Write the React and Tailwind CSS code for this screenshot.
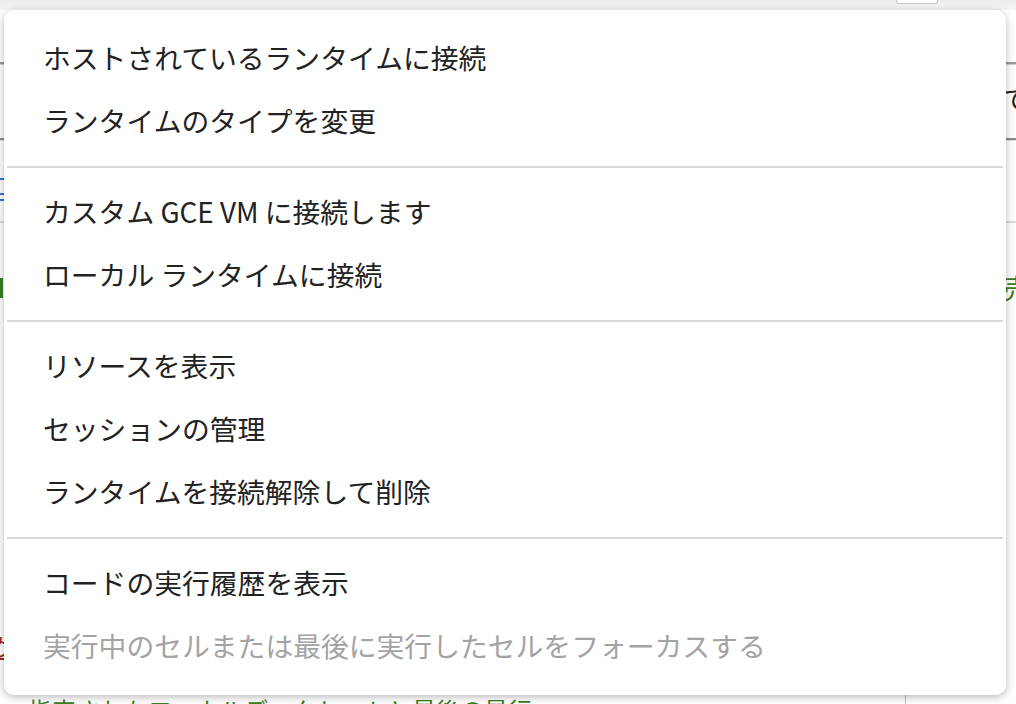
import React from 'react';

const FONT = { fontFamily: '"Noto Sans CJK JP", "Noto Sans", sans-serif' };

// groups of menu entries, separated by a rule
const GROUPS = [
  [{ label: 'ホストされているランタイムに接続' }, { label: 'ランタイムのタイプを変更' }],
  [{ label: 'カスタム GCE VM に接続します' }, { label: 'ローカル ランタイムに接続' }],
  [{ label: 'リソースを表示' }, { label: 'セッションの管理' }, { label: 'ランタイムを接続解除して削除' }],
  [{ label: 'コードの実行履歴を表示' }, { label: '実行中のセルまたは最後に実行したセルをフォーカスする', disabled: true }],
];

const MenuItem = ({ label, disabled }) => (
  <div
    className={`h-[63px] flex items-center pl-[36px] text-[27.8px] leading-none whitespace-nowrap ${
      disabled ? 'text-[#a3a3a3]' : 'text-[#222222]'
    }`}
  >
    {label}
  </div>
);

// page peeking out behind the menu
const Backdrop = () => (
  <div className="w-[1016px] h-[704px] bg-white overflow-hidden flex flex-col" style={FONT}>
    <div className="h-[10px] bg-gradient-to-b from-[#ececec] to-[#f6f6f6] flex justify-end pr-[78px]">
      <div className="w-[42px] h-[4px] border border-t-0 border-[#c8c8c8] rounded-b-[3px] bg-white" />
    </div>
    <div className="h-[52px]" />
    <div className="h-[2px] bg-[#9a9a9a]" />
    <div className="h-[6px] border-t border-[#d0d0d0]" />
    <div className="h-[68px] flex items-center justify-end text-[27px] text-[#222]">
      <span className="mr-[-13px] mt-[-10px]">て</span>
    </div>
    <div className="h-[2px] bg-[#8a8a8a]" />
    <div className="h-[8px] border-t border-[#e0e0e0]" />
    <div className="h-[30px]" />
    <div className="h-[2px] w-[12px] bg-[#3b6fd0]" />
    <div className="h-[13px]" />
    <div className="h-[2px] w-[12px] bg-[#3b6fd0]" />
    <div className="h-[4px]" />
    <div className="h-[2px] w-[12px] bg-[#3b6fd0]" />
    <div className="h-[20px]" />
    <div className="h-[2px] bg-[#dcdcdc]" />
    <div className="h-[54px]" />
    <div className="h-[22px] flex justify-between items-center">
      <div className="w-[3px] h-[20px] bg-[#3a7d22]" />
      <span className="text-[27px] text-[#3a7d22] mr-[-14px]">売</span>
    </div>
    <div className="flex-1" />
    <div className="h-[16px] flex items-start">
      <span className="text-[24px] leading-none text-[#a8231a] underline ml-[-14px]">め</span>
    </div>
    <div className="h-[45px]" />
    <div className="h-[9px] flex items-start">
      <span className="ml-[28px] mt-[3px] text-[24px] leading-none text-[#3a7d22] whitespace-nowrap">
        指定されたローカルデータセットと最後の最行
      </span>
      <div className="ml-auto mr-[110px] w-[1px] h-full bg-[#bdbdbd]" />
    </div>
  </div>
);

export default function App() {
  return (
    <div className="relative w-[1016px] h-[704px] overflow-hidden" style={FONT}>
      <Backdrop />
      {/* dropdown menu overlay */}
      <div className="absolute left-[4px] top-[10px] w-[1002px] h-[685px] bg-white rounded-[10px] shadow-[0_2px_8px_rgba(0,0,0,0.28)] pt-[16px] pb-[18px] px-[3px] flex flex-col">
        {GROUPS.map((group, gi) => (
          <div key={gi} className="flex flex-col">
            {gi > 0 && <div className="h-[2px] bg-[#dadada] mt-[14px] mb-[12px]" />}
            {group.map((item) => (
              <MenuItem key={item.label} {...item} />
            ))}
          </div>
        ))}
      </div>
    </div>
  );
}
